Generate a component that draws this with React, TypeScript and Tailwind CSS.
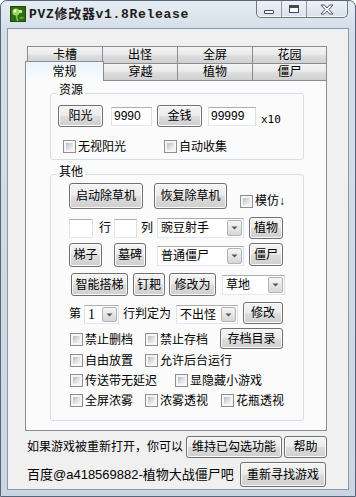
import React from 'react';

const btnSkin =
  'shrink-0 flex items-center justify-center rounded-[3px] border border-[#707070] bg-[linear-gradient(to_bottom,#f4f4f4_0%,#ececec_47%,#dcdcdc_53%,#cfcfcf_100%)] shadow-[inset_0_0_0_1px_#fbfbfb] text-[12px] leading-[14px] text-black whitespace-nowrap';
const boxSkin =
  'shrink-0 bg-white border border-[#abadb3] border-l-[#e2e3ea] border-r-[#dbdfe6] border-b-[#e3e9ef]';

function Btn({ label, cls }: { label: string; cls: string }) {
  return (
    <button type="button" className={`${btnSkin} ${cls}`}>
      {label}
    </button>
  );
}

function Field({ value, cls }: { value: string; cls: string }) {
  return (
    <div className={`${boxSkin} ${cls} flex items-center pl-[2px] text-[12px] leading-[14px]`}>{value}</div>
  );
}

function Combo({ value, cls, textCls = '' }: { value: string; cls: string; textCls?: string }) {
  return (
    <div className={`${boxSkin} ${cls} flex items-stretch p-px`}>
      <span className={`flex-1 flex items-center pl-[2px] overflow-hidden whitespace-nowrap text-[12px] leading-[14px] ${textCls}`}>
        {value}
      </span>
      <span className="w-[15px] flex items-center justify-center rounded-[2px] border border-[#b3b3b3] bg-[linear-gradient(to_bottom,#f6f6f6,#e6e6e6_50%,#d6d6d6)]">
        <svg width="7" height="4" viewBox="0 0 7 4">
          <path d="M0.5 0.5h6L3.5 3.5z" fill="#555" />
        </svg>
      </span>
    </div>
  );
}

function Check({ label, cls = '' }: { label: string; cls?: string }) {
  return (
    <div className={`flex items-center shrink-0 ${cls}`}>
      <span className="block w-[13px] h-[13px] shrink-0 border border-[#8e8f8f] bg-[#f5f5f5] p-[2px]">
        <span className="block w-full h-full bg-[linear-gradient(135deg,#b4bac1,#dfe3e7_55%,#f7f7f7)]" />
      </span>
      <span className="ml-[2px] text-[12px] leading-[14px] whitespace-nowrap">{label}</span>
    </div>
  );
}

function Tab({ label, cls }: { label: string; cls: string }) {
  return (
    <div
      className={`${cls} shrink-0 flex items-center justify-center border-t border-r border-[#898c95] bg-[linear-gradient(to_bottom,#f4f4f4,#ebebeb_45%,#dddddd_55%,#d0d0d0)] text-[12px] leading-[14px]`}
    >
      {label}
    </div>
  );
}

export default function App() {
  return (
    <div className="relative w-[356px] h-[497px] overflow-hidden flex flex-col rounded-t-[7px] border border-[#56657a] bg-[linear-gradient(to_bottom,#e6ecf3,#d5dee8_28px,#cbd6e2)] text-black font-['Liberation_Sans','Noto_Sans_CJK_SC',sans-serif]">
      {/* title bar */}
      <div className="h-[27px] shrink-0 flex items-start">
        <svg className="ml-[9px] mt-[5px] shrink-0" width="16" height="16" viewBox="0 0 16 16">
          <rect width="16" height="16" fill="#2e6a17" />
          <rect x="0.5" y="0.5" width="15" height="15" fill="none" stroke="#1b4a0c" />
          <path d="M7 8 Q6 12 8 15" stroke="#7cc242" strokeWidth="1.6" fill="none" />
          <circle cx="6" cy="6" r="3.6" fill="#9bd85c" />
          <circle cx="5" cy="5" r="1.4" fill="#f4ffe8" />
          <circle cx="10.5" cy="5.5" r="1.8" fill="#c6ee8a" />
          <path d="M9 12 q3 -3 5 0 q-3 2 -5 0z" fill="#5fae2c" />
        </svg>
        <div className="ml-[3px] mt-[6px] text-[13px] leading-[15px] tracking-[0.7px] font-bold text-[#1c1c1c] font-['Liberation_Mono','Noto_Sans_CJK_SC',monospace] whitespace-nowrap">
          PVZ修改器v1.8Release
        </div>
        <div className="ml-auto mr-[7px] flex h-[17px] rounded-b-[5px] border border-t-0 border-[#6a788a] bg-[linear-gradient(to_bottom,#eef2f7,#d9e1ea)] shadow-[inset_0_-1px_0_#f5f8fb]">
          <div className="w-[25px] flex items-center justify-center border-r border-[#8d99a8]">
            <span className="block w-[10px] h-[4px] mt-[5px] rounded-[1px] border border-[#3f4a57] bg-white" />
          </div>
          <div className="w-[25px] flex items-center justify-center border-r border-[#8d99a8]">
            <span className="block w-[10px] h-[8px] border border-[#3f4a57] border-t-[3px] bg-white" />
          </div>
          <div className="w-[40px] flex items-center justify-center">
            <svg width="14" height="11" viewBox="0 0 14 11">
              <path
                d="M1 1h3.5L7 4 9.5 1H13L9 5.5 13 10H9.5L7 7 4.5 10H1L5 5.5z"
                fill="#fff"
                stroke="#4a5563"
                strokeWidth="1"
                strokeLinejoin="round"
              />
            </svg>
          </div>
        </div>
      </div>

      {/* client area */}
      <div className="flex-1 mx-[6px] mb-[6px] border border-[#8c99aa] bg-[#f0f0f0] pt-[17px] pl-[17px]">
        {/* tabs */}
        <div className="flex ml-[2px] h-[17px]">
          <Tab label="卡槽" cls="w-[76px] h-[17px] border-l" />
          <Tab label="出怪" cls="w-[75px] h-[17px]" />
          <Tab label="全屏" cls="w-[75px] h-[17px]" />
          <Tab label="花园" cls="w-[74px] h-[17px]" />
        </div>
        <div className="flex h-[17px] items-start">
          <div className="relative z-10 -mt-[2px] w-[79px] h-[20px] shrink-0 flex items-center justify-center border border-b-0 border-[#898c95] bg-[linear-gradient(to_bottom,#eaf4fb,#fbfbfb)] text-[12px] leading-[14px]">
            常规
          </div>
          <Tab label="穿越" cls="w-[74px] h-[17px]" />
          <Tab label="植物" cls="w-[75px] h-[17px]" />
          <Tab label="僵尸" cls="w-[74px] h-[17px]" />
        </div>

        {/* tab page */}
        <div className="w-[302px] h-[351px] border border-[#898c95] bg-[#fbfbfb]">
          <fieldset className="mt-[3px] ml-[24px] w-[254px] rounded-[3px] border border-[#d5dfe5] pb-[6px]">
            <legend className="ml-[6px] px-[2px] pb-[6px] text-[12px] leading-[12px]">资源</legend>
            <div className="mt-[3px] ml-[7px] flex items-center h-[22px]">
              <Btn label="阳光" cls="w-[45px] h-[22px]" />
              <Field value="9990" cls="ml-[8px] w-[41px] h-[19px]" />
              <Btn label="金钱" cls="ml-[5px] w-[45px] h-[22px]" />
              <Field value="99999" cls="ml-[6px] w-[48px] h-[19px]" />
              <span className="ml-[5px] mt-[6px] text-[11px] leading-[13px] font-['DejaVu_Sans_Mono',monospace]">x10</span>
            </div>
            <div className="mt-[13px] ml-[12px] flex h-[13px]">
              <Check label="无视阳光" cls="w-[101px]" />
              <Check label="自动收集" />
            </div>
          </fieldset>

          <fieldset className="mt-[6px] ml-[24px] w-[254px] rounded-[3px] border border-[#d5dfe5] pb-[13px]">
            <legend className="ml-[6px] px-[2px] pb-[5px] text-[12px] leading-[12px]">其他</legend>
            <div className="ml-[18px] flex items-end h-[26px]">
              <Btn label="启动除草机" cls="w-[74px] h-[26px]" />
              <Btn label="恢复除草机" cls="ml-[11px] w-[73px] h-[26px]" />
              <Check label="模仿↓" cls="ml-[13px] mb-[1px]" />
            </div>
            <div className="mt-[8px] ml-[18px] flex items-center h-[22px] text-[12px] leading-[14px]">
              <Field value="" cls="w-[24px] h-[19px]" />
              <span className="ml-[6px]">行</span>
              <Field value="" cls="ml-[3px] w-[23px] h-[19px]" />
              <span className="ml-[4px]">列</span>
              <Combo value="豌豆射手" cls="ml-[4px] w-[87px] h-[20px]" />
              <Btn label="植物" cls="ml-[5px] w-[34px] h-[22px]" />
            </div>
            <div className="mt-[4px] ml-[18px] flex items-end h-[24px]">
              <Btn label="梯子" cls="w-[33px] h-[24px]" />
              <Btn label="墓碑" cls="ml-[12px] w-[32px] h-[24px]" />
              <Combo value="普通僵尸" cls="ml-[11px] mb-[1px] w-[87px] h-[20px]" />
              <Btn label="僵尸" cls="ml-[5px] mb-[1px] w-[34px] h-[23px]" />
            </div>
            <div className="mt-[6px] ml-[20px] flex items-center h-[23px]">
              <Btn label="智能搭梯" cls="w-[57px] h-[23px]" />
              <Btn label="钉耙" cls="ml-[5px] w-[32px] h-[23px]" />
              <Btn label="修改为" cls="ml-[4px] w-[47px] h-[23px]" />
              <Combo value="草地" cls="ml-[6px] w-[63px] h-[20px]" />
            </div>
            <div className="mt-[6px] ml-[18px] flex items-end h-[22px] text-[12px] leading-[14px]">
              <span className="mb-[3px]">第</span>
              <Combo
                value="1"
                cls="ml-[3px] w-[35px] h-[19px]"
                textCls="text-[14px] font-['Liberation_Serif',serif]"
              />
              <span className="ml-[4px] mb-[3px]">行判定为</span>
              <Combo value="不出怪" cls="ml-[5px] w-[62px] h-[19px]" />
              <Btn label="修改" cls="ml-[5px] w-[40px] h-[22px]" />
            </div>
            <div className="mt-[4px] ml-[19px] flex items-center h-[21px]">
              <Check label="禁止删档" cls="w-[75px] mt-[2px]" />
              <Check label="禁止存档" cls="w-[75px] mt-[2px]" />
              <Btn label="存档目录" cls="w-[63px] h-[21px]" />
            </div>
            <div className="mt-[5px] ml-[19px] flex h-[13px]">
              <Check label="自由放置" cls="w-[75px]" />
              <Check label="允许后台运行" />
            </div>
            <div className="mt-[7px] ml-[19px] flex h-[13px]">
              <Check label="传送带无延迟" cls="w-[105px]" />
              <Check label="显隐藏小游戏" />
            </div>
            <div className="mt-[7px] ml-[19px] flex h-[13px]">
              <Check label="全屏浓雾" cls="w-[75px]" />
              <Check label="浓雾透视" cls="w-[76px]" />
              <Check label="花瓶透视" />
            </div>
          </fieldset>
        </div>

        {/* bottom bar */}
        <div className="mt-[5px] ml-[2px] flex items-center h-[22px]">
          <span className="text-[12px] leading-[14px] whitespace-nowrap">如果游戏被重新打开，你可以</span>
          <Btn label="维持已勾选功能" cls="ml-[3px] w-[96px] h-[22px]" />
          <Btn label="帮助" cls="ml-[2px] w-[43px] h-[22px]" />
        </div>
        <div className="mt-[4px] ml-[2px] flex items-center h-[25px]">
          <span className="w-[213px] shrink-0 text-[13px] leading-[16px] whitespace-nowrap">百度@a418569882-植物大战僵尸吧</span>
          <Btn label="重新寻找游戏" cls="w-[86px] h-[25px]" />
        </div>
      </div>
    </div>
  );
}
